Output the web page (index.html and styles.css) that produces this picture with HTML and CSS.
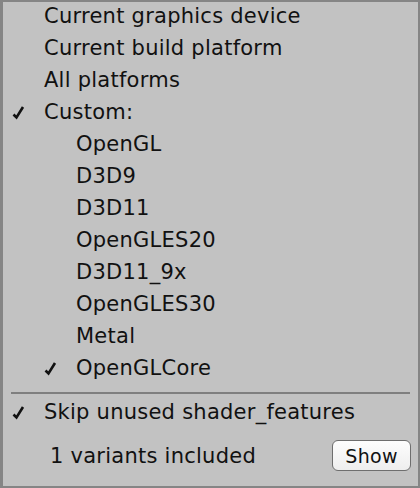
FILE: index.html
```html
<!DOCTYPE html>
<html>
<head>
<meta charset="utf-8">
<link rel="stylesheet" href="styles.css">
</head>
<body>
<div class="menu">
  <div class="list">
    <div class="item"><span class="mark"></span><span class="label">Current graphics device</span></div>
    <div class="item"><span class="mark"></span><span class="label">Current build platform</span></div>
    <div class="item"><span class="mark"></span><span class="label">All platforms</span></div>
    <div class="item"><span class="mark"><svg viewBox="0 0 13 15" width="13" height="15"><path d="M1.5 9.5 L4.5 12.5 L11 2" class="tick"/></svg></span><span class="label">Custom:</span></div>
    <div class="item sub"><span class="mark"></span><span class="label">OpenGL</span></div>
    <div class="item sub"><span class="mark"></span><span class="label">D3D9</span></div>
    <div class="item sub"><span class="mark"></span><span class="label">D3D11</span></div>
    <div class="item sub"><span class="mark"></span><span class="label">OpenGLES20</span></div>
    <div class="item sub"><span class="mark"></span><span class="label">D3D11_9x</span></div>
    <div class="item sub"><span class="mark"></span><span class="label">OpenGLES30</span></div>
    <div class="item sub"><span class="mark"></span><span class="label">Metal</span></div>
    <div class="item sub"><span class="mark"><svg viewBox="0 0 13 15" width="13" height="15"><path d="M1.5 9.5 L4.5 12.5 L11 2" class="tick"/></svg></span><span class="label">OpenGLCore</span></div>
  </div>
  <div class="sep"></div>
  <div class="item"><span class="mark"><svg viewBox="0 0 13 15" width="13" height="15"><path d="M1.5 9.5 L4.5 12.5 L11 2" class="tick"/></svg></span><span class="label">Skip unused shader_features</span></div>
  <div class="footer">
    <span class="count">1 variants included</span>
    <button class="btn">Show</button>
  </div>
</div>
</body>
</html>
```
FILE: styles.css
```css
html, body { margin: 0; padding: 0; }
body { width: 420px; height: 488px; overflow: hidden; }
.menu {
  box-sizing: border-box;
  width: 420px;
  height: 488px;
  background: #c2c2c2;
  border: 2px solid #858585;
  border-left-width: 3px;
  font-family: "DejaVu Sans", sans-serif;
  font-size: 21px;
  letter-spacing: 0.25px;
  color: #111;
}
.list { margin-top: -2px; }
.item {
  display: flex;
  align-items: center;
  height: 32px;
  padding-left: 9px;
}
.item.sub { padding-left: 41px; }
.mark { width: 32px; display: flex; align-items: center; }
.tick { fill: none; stroke: #111; stroke-width: 2.6; stroke-linejoin: miter; }
.label { white-space: nowrap; }
.sep {
  height: 2px;
  background: #7f7f7f;
  margin: 8px 8px 2px 8px;
}
.footer {
  display: flex;
  align-items: center;
  justify-content: space-between;
  padding: 12px 7px 0 47px;
}
.btn {
  font-family: "DejaVu Sans", sans-serif;
  font-size: 19px;
  letter-spacing: 0.3px;
  color: #111;
  width: 79px;
  height: 31px;
  border: 1px solid #6e6e6e;
  border-radius: 6px;
  background: linear-gradient(#fdfdfd, #eeeeee);
  padding: 0;
}
```
